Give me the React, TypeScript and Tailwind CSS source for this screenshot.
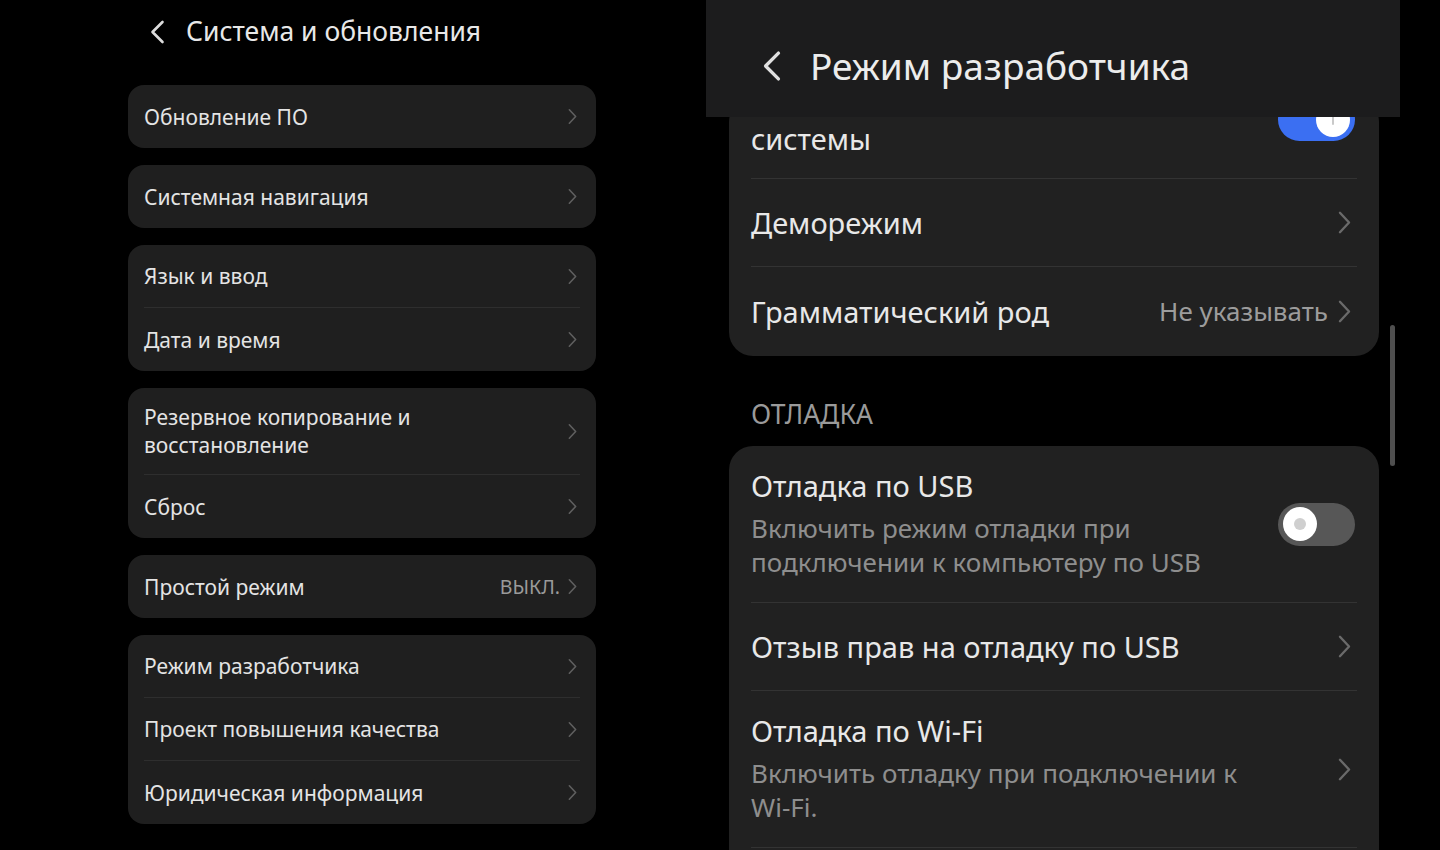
import React from "react";

const Chevron = ({ className }: { className: string }) => (
  <svg viewBox="0 0 10 18" fill="none" className={className}>
    <path d="M1.5 1.5L8.5 9L1.5 16.5" stroke="currentColor" strokeWidth="1.8" strokeLinecap="round" strokeLinejoin="round" />
  </svg>
);

const BackArrow = ({ className }: { className: string }) => (
  <svg viewBox="0 0 14 24" fill="none" className={className}>
    <path d="M12 2L2 12L12 22" stroke="currentColor" strokeWidth="2.6" strokeLinecap="round" strokeLinejoin="round" />
  </svg>
);

type LeftItem = { label: string; value?: string; tall?: boolean };

const leftGroups: LeftItem[][] = [
  [{ label: "Обновление ПО" }],
  [{ label: "Системная навигация" }],
  [{ label: "Язык и ввод" }, { label: "Дата и время" }],
  [{ label: "Резервное копирование и восстановление", tall: true }, { label: "Сброс" }],
  [{ label: "Простой режим", value: "ВЫКЛ." }],
  [{ label: "Режим разработчика" }, { label: "Проект повышения качества" }, { label: "Юридическая информация" }],
];

const LeftRow = ({ item, last }: { item: LeftItem; last: boolean }) => (
  <div className="px-4">
    <div
      className={
        "flex items-center justify-between " +
        (item.tall ? "h-[87px]" : "h-[63px]") +
        (last ? "" : " border-b border-[#2e2e2e]")
      }
    >
      <div className={"text-[21px] leading-[28px] text-[#e4e4e4] " + (item.tall ? "w-[310px]" : "")}>{item.label}</div>
      <div className="flex items-center gap-[8px]">
        {item.value && <span className="text-[19.5px] text-[#9a9a9a]">{item.value}</span>}
        <Chevron className="w-[9px] h-[17px] text-[#5f5f5f] mr-[3px]" />
      </div>
    </div>
  </div>
);

const Toggle = ({ on }: { on: boolean }) =>
  on ? (
    <div className="w-[77px] h-[43px] rounded-full bg-[#3b6ff2] flex items-center justify-end pr-[5px]">
      <div className="w-[34px] h-[34px] rounded-full bg-white flex items-center justify-center">
        <div className="w-[2px] h-[10px] bg-[#c9c9c9] rounded-full" />
      </div>
    </div>
  ) : (
    <div className="w-[77px] h-[43px] rounded-full bg-[#575757] flex items-center pl-[5px]">
      <div className="w-[34px] h-[34px] rounded-full bg-white flex items-center justify-center">
        <div className="w-[12px] h-[12px] bg-[#cfcfcf] rounded-full" />
      </div>
    </div>
  );

const RightRow = ({
  title,
  sub,
  value,
  right,
  h,
  last,
}: {
  title: React.ReactNode;
  sub?: React.ReactNode;
  value?: string;
  right: "chevron" | "on" | "off";
  h: string;
  last?: boolean;
}) => (
  <div className="px-[22px]">
    <div className={"flex items-center justify-between " + h + (last ? "" : " border-b border-[#333333]")}>
      <div>
        <div className="text-[29px] leading-[34px] text-[#e8e8e8]">{title}</div>
        {sub && <div className="mt-[8px] text-[26px] leading-[34px] text-[#8e8e8e]">{sub}</div>}
      </div>
      <div className="flex items-center gap-[10px] mr-[2px]">
        {value && <span className="text-[26px] text-[#9c9c9c]">{value}</span>}
        {right === "chevron" && <Chevron className="w-[13px] h-[25px] text-[#6a6a6a] mr-[4px]" />}
        {right === "on" && <Toggle on />}
        {right === "off" && <Toggle on={false} />}
      </div>
    </div>
  </div>
);

export default function App() {
  return (
    <div className="w-[1440px] h-[850px] bg-black flex overflow-hidden font-['Noto_Sans',sans-serif]">
      {/* left: system & updates */}
      <div className="ml-[128px] w-[468px] flex flex-col gap-[21px]">
        <div className="h-[64px] flex items-center pl-[22px] gap-[21px]">
          <BackArrow className="w-[15px] h-[24px] text-[#dcdcdc]" />
          <span className="text-[26.5px] text-[#e8e8e8]">Система и обновления</span>
        </div>
        <div className="flex flex-col gap-[17px]">
          {leftGroups.map((g, i) => (
            <div key={i} className="bg-[#1f1f1f] rounded-[16px]">
              {g.map((it, j) => (
                <LeftRow key={j} item={it} last={j === g.length - 1} />
              ))}
            </div>
          ))}
        </div>
      </div>

      {/* right: developer mode */}
      <div className="ml-[110px] w-[694px] h-[850px] flex flex-col relative">
        <div className="h-[117px] shrink-0 bg-[#1c1c1d] flex items-center pl-[57px] pt-[14px] gap-[29px]">
          <BackArrow className="w-[18px] h-[32px] text-[#e0e0e0]" />
          <span className="text-[37px] text-[#ececec]">Режим разработчика</span>
        </div>

        <div className="absolute left-[684px] top-[325px] w-[5px] h-[141px] rounded-full bg-[#4f4f4f]" />

        <div className="flex-1 overflow-hidden">
          <div className="pl-[23px] w-[673px] -mt-[19px]">
            <div className="bg-[#212121] rounded-[24px]">
              {/* row scrolled up under the header */}
              <div className="px-[22px]">
                <div className="h-[81px] flex justify-between border-b border-[#333333]">
                  <div className="pt-[24px] text-[29px] leading-[34px] text-[#e8e8e8]">системы</div>
                  <div className="mr-[2px]">
                    <Toggle on />
                  </div>
                </div>
              </div>
              <RightRow title="Деморежим" right="chevron" h="h-[88px]" />
              <RightRow title="Грамматический род" value="Не указывать" right="chevron" h="h-[89px]" last />
            </div>

            <div className="h-[90px] flex items-end pb-[11px] pl-[22px]">
              <span className="text-[26.5px] text-[#9a9a9a]">ОТЛАДКА</span>
            </div>

            <div className="bg-[#212121] rounded-[24px] pb-[60px]">
              <RightRow
                title="Отладка по USB"
                sub={
                  <>
                    Включить режим отладки при
                    <br />
                    подключении к компьютеру по USB
                  </>
                }
                right="off"
                h="h-[157px]"
              />
              <RightRow title="Отзыв прав на отладку по USB" right="chevron" h="h-[88px]" />
              <RightRow
                title="Отладка по Wi-Fi"
                sub={
                  <>
                    Включить отладку при подключении к
                    <br />
                    Wi-Fi.
                  </>
                }
                right="chevron"
                h="h-[157px]"
              />
            </div>
          </div>
        </div>
      </div>
    </div>
  );
}
